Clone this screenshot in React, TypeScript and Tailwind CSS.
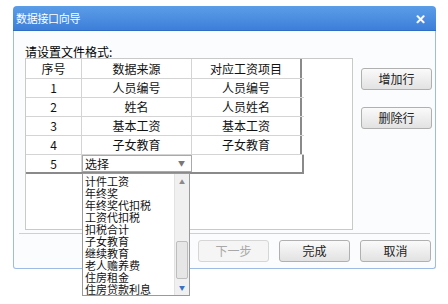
import React from 'react';

const font = { fontFamily: '"Noto Sans CJK SC", "Noto Sans", sans-serif' };

const rows = [
  { no: '1', src: '人员编号', target: '人员编号' },
  { no: '2', src: '姓名', target: '人员姓名' },
  { no: '3', src: '基本工资', target: '基本工资' },
  { no: '4', src: '子女教育', target: '子女教育' },
];

const options = [
  '计件工资',
  '年终奖',
  '年终奖代扣税',
  '工资代扣税',
  '扣税合计',
  '子女教育',
  '继续教育',
  '老人赡养费',
  '住房租金',
  '住房贷款利息',
];

function Button({ label, disabled }: { label: string; disabled?: boolean }) {
  return (
    <button
      className={`w-[71px] h-[22px] rounded-[3px] border text-[12px] leading-none ${
        disabled
          ? 'border-[#d6d6d6] bg-[#f5f5f5] text-[#a8a8a8]'
          : 'border-[#b0b0b0] bg-gradient-to-b from-[#fafafa] to-[#e2e2e2] text-[#222]'
      }`}
    >
      {label}
    </button>
  );
}

export default function App() {
  return (
    <div className="w-[448px] h-[304px] bg-white relative overflow-hidden" style={font}>
      <div className="ml-[13px] pt-[6px] w-[423px]">
        {/* Title bar */}
        <div className="h-[25px] rounded-t-[4px] bg-gradient-to-b from-[#5c9de8] to-[#3d7fd9] border-b border-[#2f6cc4] flex items-center justify-between pl-[3px] pr-[10px]">
          <span className="text-white text-[11px] tracking-[-0.3px]">数据接口向导</span>
          <span className="text-white text-[13px] font-bold leading-none">✕</span>
        </div>

        {/* Body */}
        <div className="h-[238px] bg-[#fbfcfe] border-x border-b border-[#9dbbe4] rounded-b-[3px] pl-[11px] pr-[3px]">
          <div className="pt-[14px] text-[12px] leading-[13px] text-black">请设置文件格式:</div>

          <div className="flex">
            {/* Grid */}
            <div className="w-[328px] h-[172px] bg-white border border-[#c9c9c9] flex">
              <div className="w-[278px] flex flex-col text-[12px] text-[#111]">
                <div className="flex h-[20px] border-b border-[#d4d4d4]">
                  <div className="w-[56px] border-r border-[#d4d4d4] flex items-center justify-center">序号</div>
                  <div className="w-[110px] border-r border-[#d4d4d4] flex items-center justify-center">数据来源</div>
                  <div className="w-[110px] border-r-2 border-[#8a8a8a] flex items-center justify-center">对应工资项目</div>
                </div>
                {rows.map((r) => (
                  <div key={r.no} className="flex h-[19px] border-b border-[#d4d4d4]">
                    <div className="w-[56px] border-r border-[#d4d4d4] flex items-center justify-center">{r.no}</div>
                    <div className="w-[110px] border-r border-[#d4d4d4] flex items-center justify-center">{r.src}</div>
                    <div className="w-[110px] border-r-2 border-[#8a8a8a] flex items-center justify-center">{r.target}</div>
                  </div>
                ))}
                <div className="flex h-[19px] border-b-2 border-[#8a8a8a]">
                  <div className="w-[56px] border-r border-[#d4d4d4] flex items-center justify-center">5</div>
                  <div className="w-[110px] relative">
                    <div className="h-full border border-[#a9a9a9] bg-white flex items-center justify-between pl-[2px] pr-[6px]">
                      <span>选择</span>
                      <span className="text-[7px] text-[#777]">▼</span>
                    </div>
                    {/* Open dropdown list */}
                    <div className="absolute left-0 top-[18px] w-[108px] h-[123px] bg-white border border-[#9a9a9a] flex z-10">
                      <div className="flex-1 flex flex-col pl-[2px] pt-[1px] text-[11px] leading-[12px] text-[#111]">
                        {options.map((o) => (
                          <div key={o} className="h-[12px]">{o}</div>
                        ))}
                      </div>
                      <div className="w-[15px] bg-[#f0f0f0] border-l border-[#e2e2e2] flex flex-col items-center">
                        <div className="h-[15px] flex items-center justify-center text-[6px] text-[#8a8a8a]">▲</div>
                        <div className="flex-1 w-full flex flex-col">
                          <div className="h-[52px]" />
                          <div className="h-[38px] mx-[1px] bg-[#e6e6e6] border border-[#bdbdbd] rounded-[2px]" />
                        </div>
                        <div className="h-[15px] flex items-center justify-center text-[6px] text-[#3b6fc4]">▼</div>
                      </div>
                    </div>
                  </div>
                  <div className="w-[112px] border-r-2 border-[#8a8a8a]" />
                </div>
              </div>
              <div className="flex-1" />
            </div>

            {/* Side buttons */}
            <div className="ml-[8px] pt-[10px] flex flex-col gap-[17px]">
              <Button label="增加行" />
              <Button label="删除行" />
            </div>
          </div>

          {/* Separator */}
          <div className="mt-[3px] -ml-[6px] mr-[2px] border-t border-[#c8d2de]" />

          {/* Footer buttons */}
          <div className="mt-[6px] flex justify-end gap-[10px] pr-[1px]">
            <Button label="下一步" disabled />
            <Button label="完成" />
            <Button label="取消" />
          </div>
        </div>
      </div>
    </div>
  );
}
